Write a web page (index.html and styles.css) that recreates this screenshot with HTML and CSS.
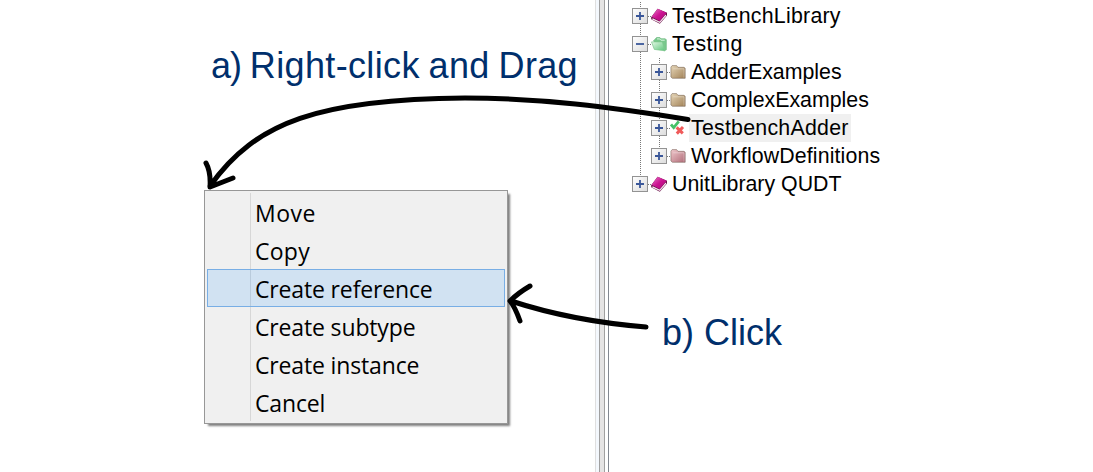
FILE: index.html
```html
<!DOCTYPE html>
<html lang="en">
<head>
<meta charset="utf-8">
<title>Create a reference</title>
<link rel="stylesheet" href="styles.css">
</head>
<body>
<svg class="defs" width="0" height="0" aria-hidden="true">
  <defs>
    <linearGradient id="tan" x1="0" y1="0" x2="1" y2="1"><stop offset="0" stop-color="#e6d6b8"/><stop offset="1" stop-color="#a08055"/></linearGradient>
    <linearGradient id="rose" x1="0" y1="0" x2="1" y2="1"><stop offset="0" stop-color="#f0c8cc"/><stop offset="1" stop-color="#b06c78"/></linearGradient>
    <linearGradient id="green" x1="0" y1="0" x2="1" y2="1"><stop offset="0" stop-color="#e4f9e6"/><stop offset="1" stop-color="#5cc47a"/></linearGradient>
    <linearGradient id="cover" x1="0" y1="0" x2="1" y2="1"><stop offset="0" stop-color="#e87cc6"/><stop offset=".5" stop-color="#cc1292"/><stop offset="1" stop-color="#a80c74"/></linearGradient>
    <linearGradient id="box" x1="0" y1="0" x2="1" y2="1"><stop offset="0" stop-color="#fff"/><stop offset="1" stop-color="#dcdcdc"/></linearGradient>
    <symbol id="plus" viewBox="0 0 16 16"><rect x=".5" y=".5" width="15" height="15" fill="url(#box)" stroke="#939393"/><path d="M4 8h8M8 4v8" stroke="#3a5799" stroke-width="1.8"/></symbol>
    <symbol id="minus" viewBox="0 0 16 16"><rect x=".5" y=".5" width="15" height="15" fill="url(#box)" stroke="#939393"/><path d="M4 8h8" stroke="#3a5799" stroke-width="1.8"/></symbol>
    <symbol id="book" viewBox="0 0 16 16"><path d="M.2 9.2 6.6.8 16 4.8v2.6L8.8 15.8.2 11.2z" fill="#6a1048"/><path d="M1.4 10.8 8.7 14.3 15 7" fill="none" stroke="#f6e6ef" stroke-width="1.3"/><path d="M.6 8.8 6.7.8 15.6 4.8 8.7 12.9z" fill="url(#cover)"/></symbol>
    <symbol id="folder" viewBox="0 0 16 16"><path d="M.9 3.1 2.1 1.6h4.5L8 3.3h6l1.2 1v10H2.4L.9 13z" stroke="rgba(75,55,40,.5)" stroke-width=".8"/><path d="M3.2 4.8h10.8v9" fill="none" stroke="rgba(255,255,255,.3)"/></symbol>
    <symbol id="open" viewBox="0 0 16 16"><path d="M2.4 5 5.6 1.5h3.3l1.2 1.3h4.2l1 1v10l-2 .9z" fill="#78c88c" stroke="#6fb881" stroke-width=".7"/><path d="M.5 5.9h10.9l2.4 8.9-10.5-1.4z" fill="url(#green)" stroke="#7cc68d" stroke-width=".7"/><path d="M6 2.9h2.7l1.2 1.3h3.8" fill="none" stroke="#d8f7de"/></symbol>
    <symbol id="test" viewBox="0 0 16 16"><path d="m1 4.4 2.7 3.2L8.8 1.4" fill="none" stroke="#45c168" stroke-width="2.8"/><path d="m6.6 7.3 6.2 6M13 7l-6.2 6.6" stroke="#f05a5a" stroke-width="3"/></symbol>
  </defs>
</svg>

<main class="screen">
  <section class="canvas">
    <h1 class="note drag"><span class="step">a)</span> Right-click and Drag</h1>
    <ul class="menu">
      <li class="item">Move</li>
      <li class="item">Copy</li>
      <li class="item active">Create reference</li>
      <li class="item">Create subtype</li>
      <li class="item">Create instance</li>
      <li class="item">Cancel</li>
    </ul>
  </section>
  <div class="splitter"><i class="edge"></i><i class="grip"></i><i class="gap"></i></div>
  <section class="side">
    <ul class="tree">
      <li class="row"><svg class="toggle"><use href="#plus"/></svg><svg class="icon"><use href="#book"/></svg><span class="label wide">TestBenchLibrary</span></li>
      <li class="row"><svg class="toggle"><use href="#minus"/></svg><svg class="icon"><use href="#open"/></svg><span class="label wider">Testing</span></li>
      <li class="branch">
        <ul class="subtree">
          <li class="row"><svg class="toggle"><use href="#plus"/></svg><svg class="icon tan"><use href="#folder"/></svg><span class="label">AdderExamples</span></li>
          <li class="row"><svg class="toggle"><use href="#plus"/></svg><svg class="icon tan"><use href="#folder"/></svg><span class="label">ComplexExamples</span></li>
          <li class="row"><svg class="toggle"><use href="#plus"/></svg><svg class="icon"><use href="#test"/></svg><span class="label wide selected">TestbenchAdder</span></li>
          <li class="row"><svg class="toggle"><use href="#plus"/></svg><svg class="icon rose"><use href="#folder"/></svg><span class="label slight">WorkflowDefinitions</span></li>
        </ul>
      </li>
      <li class="row"><svg class="toggle"><use href="#plus"/></svg><svg class="icon"><use href="#book"/></svg><span class="label">UnitLibrary QUDT</span></li>
    </ul>
    <p class="note click">b) Click</p>
  </section>
  <svg class="arrows" viewBox="0 0 1093 472" aria-hidden="true">
    <path d="M688 119.5C610 107 540 98 465 98 320 99 255 122 210 186M206 163Q211 172 210 187L233 178"/>
    <path d="M646 327Q572 321 511 301M530 286Q518 293 510 301 515 307 520 321"/>
  </svg>
</main>
</body>
</html>
```

FILE: styles.css
```css
* { box-sizing: border-box; }
body { margin: 0; background: #fff; overflow: hidden; }
ul, h1, p { margin: 0; padding: 0; list-style: none; }
.defs { position: absolute; }

.screen { position: relative; display: flex; width: 1093px; height: 472px; }
.canvas { width: 595px; padding: 45px 0 0 204px; }
.note {
  padding-left: 6px;
  font: 400 36px/42px "Liberation Sans", Arial, sans-serif;
  color: #002f6c;
  white-space: nowrap;
}
.drag { padding-left: 7px; letter-spacing: .35px; word-spacing: -1.5px; }
.step { letter-spacing: -1px; }

.menu {
  width: 304px;
  height: 234px;
  margin-top: 103px;
  padding: 2px;
  border: 1px solid #979797;
  background: linear-gradient(#d7d7d7, #d7d7d7) 45px 2px / 1px 228px no-repeat, #f0f0f0;
  box-shadow: 3px 3px 2px -1px rgba(0, 0, 0, .5);
}
.item {
  height: 38px;
  padding: 1px 0 0 47px;
  border: 1px solid transparent;
  font: 23px/36px "Open Sans", "Noto Sans", sans-serif;
  letter-spacing: -.15px;
  color: #000;
  white-space: nowrap;
}
.item:first-child { letter-spacing: .5px; }
.item:nth-child(2) { letter-spacing: .25px; }
.active {
  border-color: #78aee5;
  background: linear-gradient(#b9cbdc, #b9cbdc) 42px 0 / 1px 100% no-repeat, #d1e2f2;
}

.splitter { display: flex; width: 14px; }
.edge { width: 4px; border-left: 1px solid #dfdfdf; background: #f4f8fd; }
.grip { width: 6px; border: solid #a0a0a0; border-width: 0 1px; background: #e5e4e4; }
.gap { width: 4px; border-right: 1px solid #828790; }

.side { padding: 2px 0 0 23px; }
.tree {
  font: 21.33px/28px "Liberation Sans", Arial, sans-serif;
  color: #000;
  background: repeating-linear-gradient(#777 0 1px, transparent 1px 2px) 8px -2px / 1px 182px no-repeat;
}
.subtree {
  margin-left: 19px;
  background: repeating-linear-gradient(#777 0 1px, transparent 1px 2px) 8px 0 / 1px 98px no-repeat;
}
.row {
  display: flex;
  align-items: center;
  height: 28px;
  background: repeating-linear-gradient(90deg, #777 0 1px, transparent 1px 2px) 16px 14px / 4px 1px no-repeat;
}
.toggle { width: 16px; height: 16px; }
.icon { width: 16px; height: 16px; margin-left: 3px; }
.tan { fill: url(#tan); }
.rose { fill: url(#rose); }
.label { padding: 0 2px; margin-left: 3px; white-space: nowrap; }
.wide { letter-spacing: .25px; }
.wider { letter-spacing: .45px; }
.slight { letter-spacing: .12px; }
.selected { background: #f0f0f0; }
.click { margin-top: 114px; padding-left: 30px; }

.arrows {
  position: absolute;
  inset: 0;
  width: 1093px;
  height: 472px;
  fill: none;
  stroke: #000;
  stroke-width: 5;
  stroke-linecap: round;
  stroke-linejoin: round;
}
```
